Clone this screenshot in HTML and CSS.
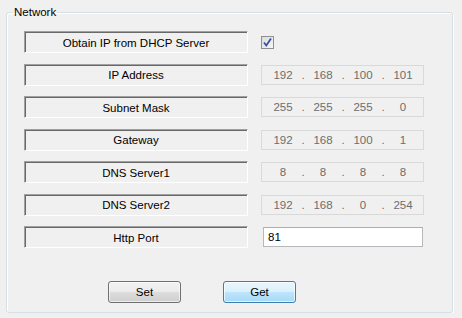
FILE: index.html
```html
<!DOCTYPE html>
<html lang="en">
<head>
  <meta charset="UTF-8" />
  <title>Network</title>
  <link rel="stylesheet" href="styles.css">
</head>
<body>
  <fieldset class="group">
    <legend>Network</legend>

    <div class="rows">
      <div class="label">Obtain IP from DHCP Server</div>
      <div class="cell">
        <span class="check">
          <svg width="11" height="11" viewBox="0 0 11 11"><path d="M2 5.5 L4.3 8.5 L9 1.5" fill="none" stroke="#3a52a0" stroke-width="1.8"/></svg>
        </span>
      </div>

      <div class="label">IP Address</div>
      <div class="cell">
        <div class="ip">
          <span class="num">192</span><span class="dot">.</span><span class="num">168</span><span class="dot">.</span><span class="num">100</span><span class="dot">.</span><span class="num">101</span>
        </div>
      </div>

      <div class="label">Subnet Mask</div>
      <div class="cell">
        <div class="ip">
          <span class="num">255</span><span class="dot">.</span><span class="num">255</span><span class="dot">.</span><span class="num">255</span><span class="dot">.</span><span class="num">0</span>
        </div>
      </div>

      <div class="label">Gateway</div>
      <div class="cell">
        <div class="ip">
          <span class="num">192</span><span class="dot">.</span><span class="num">168</span><span class="dot">.</span><span class="num">100</span><span class="dot">.</span><span class="num">1</span>
        </div>
      </div>

      <div class="label">DNS Server1</div>
      <div class="cell">
        <div class="ip">
          <span class="num">8</span><span class="dot">.</span><span class="num">8</span><span class="dot">.</span><span class="num">8</span><span class="dot">.</span><span class="num">8</span>
        </div>
      </div>

      <div class="label">DNS Server2</div>
      <div class="cell">
        <div class="ip">
          <span class="num">192</span><span class="dot">.</span><span class="num">168</span><span class="dot">.</span><span class="num">0</span><span class="dot">.</span><span class="num">254</span>
        </div>
      </div>

      <div class="label">Http Port</div>
      <div class="cell">
        <input class="port" type="text" value="81">
      </div>
    </div>

    <div class="buttons">
      <button class="btn">Set</button>
      <button class="btn btn-focus">Get</button>
    </div>
  </fieldset>
</body>
</html>
```

FILE: styles.css
```css
body {
  font-family: "Liberation Sans", Arial, sans-serif;
  font-size: 11px;
  margin: 0;
  padding: 0;
  background: #f0f0f0;
  color: #000;
}
.group {
  box-sizing: border-box;
  width: 447px;
  height: 308px;
  margin: 5px 0 0 6px;
  padding: 0 0 0 17px;
  border: 1px solid #d5dfe5;
  border-radius: 3px;
  box-shadow: 1px 1px 0 #fff, inset 1px 1px 0 #fff;
}
.group legend {
  margin-left: -11px;
  padding: 0 1px;
  line-height: 14px;
  font-size: 11.5px;
}
.rows {
  display: grid;
  grid-template-columns: 224px 176px;
  grid-auto-rows: 22px;
  row-gap: 10.5px;
  column-gap: 13px;
  margin-top: 12px;
}
.label {
  box-sizing: border-box;
  display: flex;
  align-items: center;
  justify-content: center;
  border-top: 1px solid #a0a0a0;
  border-left: 1px solid #a0a0a0;
  border-right: 1px solid #fff;
  border-bottom: 1px solid #fff;
  box-shadow: inset 1px 1px 0 #696969;
  padding-top: 1px;
  font-size: 11.5px;
}
.cell {
  display: flex;
  align-items: center;
}
.check {
  box-sizing: border-box;
  width: 13px;
  height: 13px;
  border: 1px solid #8e8f8f;
  background: linear-gradient(135deg, #dcdcdc, #f6f6f6);
  display: flex;
  align-items: center;
  justify-content: center;
}
.ip {
  box-sizing: border-box;
  width: 163px;
  height: 20px;
  border: 1px solid #d9d9d9;
  background: #f0f0f0;
  color: #6d6d6d;
  display: flex;
  align-items: center;
  padding-left: 5px;
  font-size: 11.5px;
}
.num {
  width: 32px;
  text-align: center;
}
.dot {
  width: 8px;
  text-align: center;
}
.port {
  box-sizing: border-box;
  width: 160px;
  height: 20px;
  margin-left: 2px;
  border: 1px solid #b5b8bd;
  border-top-color: #abadb3;
  background: #fff;
  font-family: "Liberation Sans", Arial, sans-serif;
  font-size: 11.5px;
  padding: 0 0 0 4px;
  outline: none;
}
.buttons {
  display: flex;
  gap: 42px;
  margin-top: 33px;
  padding-left: 84px;
}
.btn {
  width: 73px;
  height: 22px;
  border: 1px solid #707070;
  border-radius: 3px;
  background: linear-gradient(#f2f2f2 0%, #ebebeb 50%, #dddddd 50%, #cfcfcf 100%);
  font-family: "Liberation Sans", Arial, sans-serif;
  font-size: 11.5px;
  color: #000;
  padding: 0;
  box-shadow: inset 0 0 0 1px rgba(255,255,255,0.6);
}
.btn-focus {
  border-color: #3c7fb1;
  background: linear-gradient(#eaf6fd 0%, #d9f0fc 50%, #bee6fd 50%, #a7d9f5 100%);
  box-shadow: inset 0 0 0 1px rgba(255,255,255,0.7);
}
```
